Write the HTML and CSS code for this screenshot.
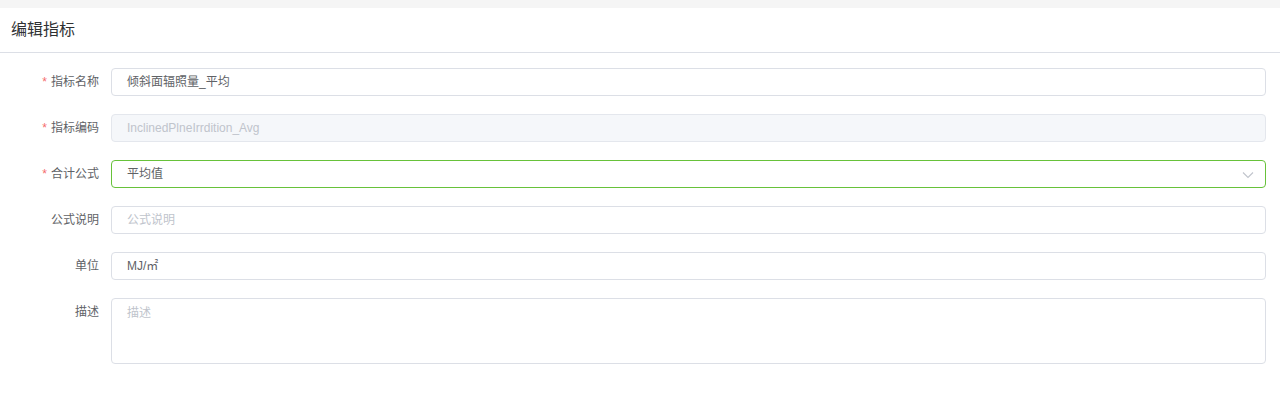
FILE: index.html
```html
<!DOCTYPE html>
<html lang="zh">
<head>
<meta charset="utf-8">
<title>编辑指标</title>
<link rel="stylesheet" href="styles.css">
</head>
<body>
<div class="topstrip"></div>
<div class="panel">
  <div class="panel-header">编辑指标</div>
  <form class="form">
    <div class="row">
      <label class="label"><span class="req">*</span>指标名称</label>
      <div class="control"><div class="input">倾斜面辐照量_平均</div></div>
    </div>
    <div class="row">
      <label class="label"><span class="req">*</span>指标编码</label>
      <div class="control"><div class="input disabled">InclinedPlneIrrdition_Avg</div></div>
    </div>
    <div class="row">
      <label class="label"><span class="req">*</span>合计公式</label>
      <div class="control"><div class="input select">平均值
        <svg class="arrow" width="12" height="8" viewBox="0 0 12 8"><path d="M1 1.5 L6 6.5 L11 1.5" fill="none" stroke="#c0c4cc" stroke-width="1.1"/></svg>
      </div></div>
    </div>
    <div class="row">
      <label class="label">公式说明</label>
      <div class="control"><div class="input placeholder">公式说明</div></div>
    </div>
    <div class="row">
      <label class="label">单位</label>
      <div class="control"><div class="input">MJ/㎡</div></div>
    </div>
    <div class="row">
      <label class="label">描述</label>
      <div class="control"><div class="textarea placeholder">描述</div></div>
    </div>
  </form>
</div>
</body>
</html>
```
FILE: styles.css
```css
html, body {
  margin: 0;
  padding: 0;
  background: #ffffff;
  font-family: "Liberation Sans", "Noto Sans CJK SC", sans-serif;
}
.topstrip {
  height: 8px;
  background: #f5f5f5;
}
.panel {
  background: #fff;
}
.panel-header {
  height: 44px;
  line-height: 44px;
  padding-left: 11px;
  font-size: 16px;
  color: #303133;
  border-bottom: 1px solid #dcdfe6;
}
.form {
  padding: 15px 14px 0 0;
}
.row {
  display: flex;
  margin-bottom: 18px;
}
.label {
  width: 99px;
  padding-right: 12px;
  text-align: right;
  font-size: 12px;
  line-height: 28px;
  color: #606266;
  flex-shrink: 0;
}
.req {
  color: #f56c6c;
  margin-right: 4px;
}
.control {
  flex: 1;
}
.input {
  position: relative;
  height: 26px;
  line-height: 26px;
  border: 1px solid #dcdfe6;
  border-radius: 4px;
  padding: 0 15px;
  font-size: 12px;
  color: #606266;
}
.input.disabled {
  background: #f5f7fa;
  border-color: #e4e7ed;
  color: #c0c4cc;
}
.input.select {
  border-color: #67c23a;
}
.arrow {
  position: absolute;
  right: 11px;
  top: 10px;
}
.placeholder {
  color: #c0c4cc;
}
.textarea {
  height: 64px;
  border: 1px solid #dcdfe6;
  border-radius: 4px;
  padding: 5px 15px;
  box-sizing: border-box;
  height: 66px;
  font-size: 12px;
  line-height: 18px;
}
```
